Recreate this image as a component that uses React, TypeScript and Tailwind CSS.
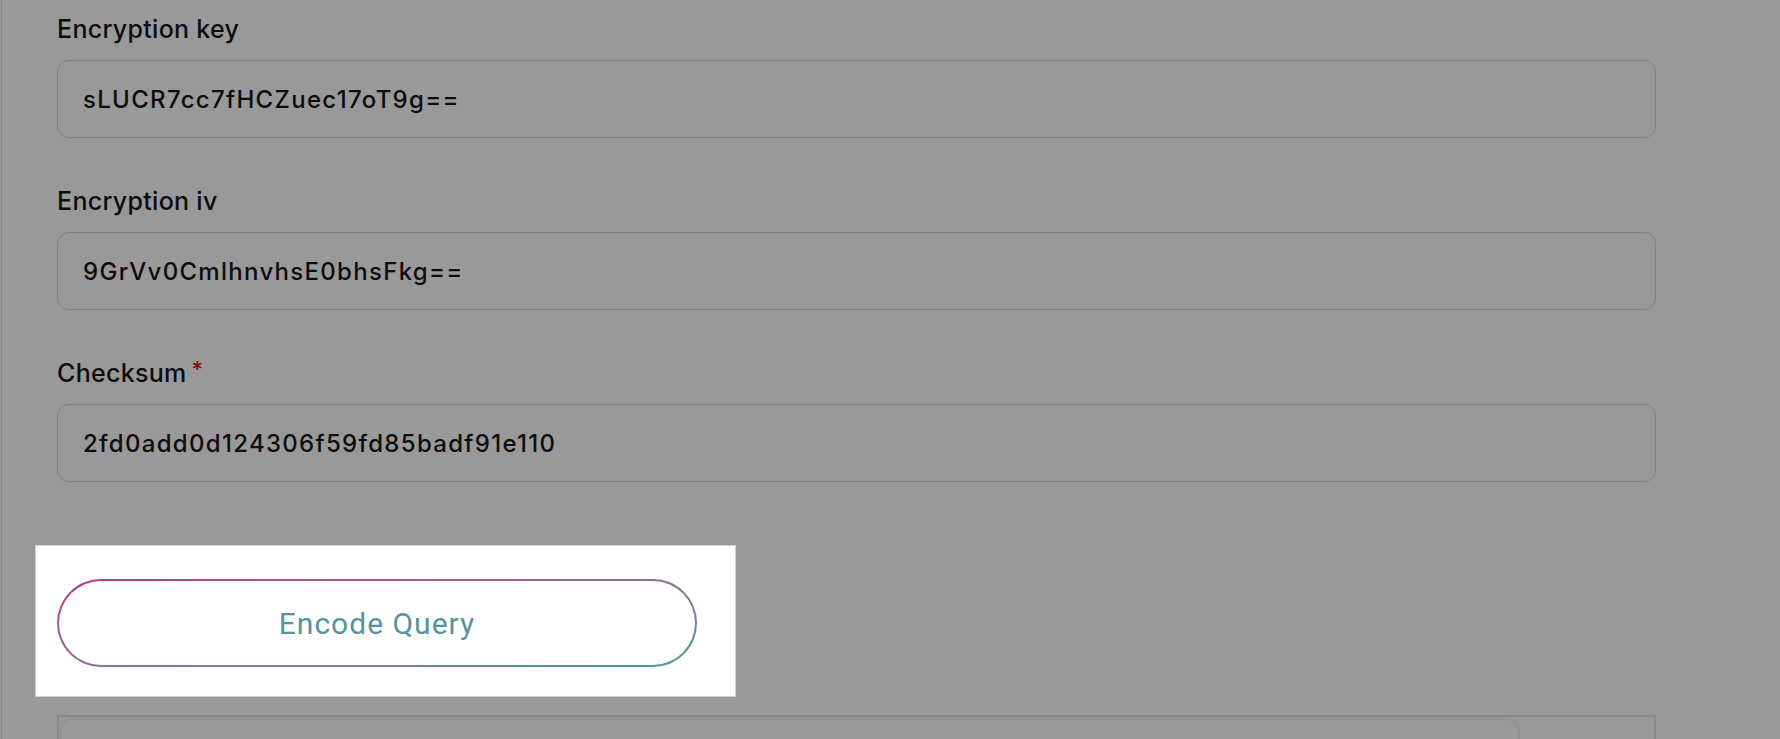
const fields = [
  { label: 'Encryption key', value: 'sLUCR7cc7fHCZuec17oT9g==', required: false },
  { label: 'Encryption iv', value: '9GrVv0CmlhnvhsE0bhsFkg==', required: false },
  { label: 'Checksum', value: '2fd0add0d124306f59fd85badf91e110', required: true },
];

function Field({ label, value, required }: { label: string; value: string; required: boolean }) {
  return (
    <div className="flex flex-col">
      <label className="block text-[25px] font-medium leading-[30px] tracking-[0.3px] text-[#0d0d0d]">
        {label}
        {required && <span className="ml-[5px] align-top text-[22px] leading-[22px] text-[#8b0a0a]">*</span>}
      </label>
      <div className="mt-[16px] flex h-[78px] items-center rounded-[12px] border-[1.5px] border-[#7f848a] pl-[25px] pt-[2px]">
        <span className="text-[24px] font-medium tracking-[1.3px] text-[#0d0d0d]">{value}</span>
      </div>
    </div>
  );
}

export default function App() {
  return (
    <div className="min-h-screen bg-[#999999]" style={{ fontFamily: 'Inter, "Liberation Sans", sans-serif' }}>
      <div className="ml-px min-h-screen border-l-[1.5px] border-[#878b90] pl-[55px] pt-[14px]">
        <div className="flex w-[1599px] flex-col gap-[48px]">
          {fields.map((f) => (
            <Field key={f.label} {...f} />
          ))}
        </div>

        <div className="-ml-[22px] mt-[63px] w-[701px] border border-[#d0d0d0] bg-white pb-[29px] pl-[21px] pt-[33px]">
          <div className="w-[640px] rounded-full bg-linear-to-br from-[#b5378a] to-[#4597a3] p-[2px]">
            <button
              className="flex h-[84px] w-full items-center justify-center rounded-full bg-white text-[30px] tracking-[1px] text-[#5593a0]"
              style={{ fontFamily: 'Roboto, "Liberation Sans", sans-serif' }}
            >
              Encode Query
            </button>
          </div>
        </div>

        <div className="mt-[18px] h-[40px] w-[1599px] border-x-2 border-t-2 border-[#8a8a8c] pl-px pt-px">
          <div className="h-full w-[1460px] rounded-t-[12px] border-x-2 border-t-2 border-[#929294]" />
        </div>
      </div>
    </div>
  );
}
